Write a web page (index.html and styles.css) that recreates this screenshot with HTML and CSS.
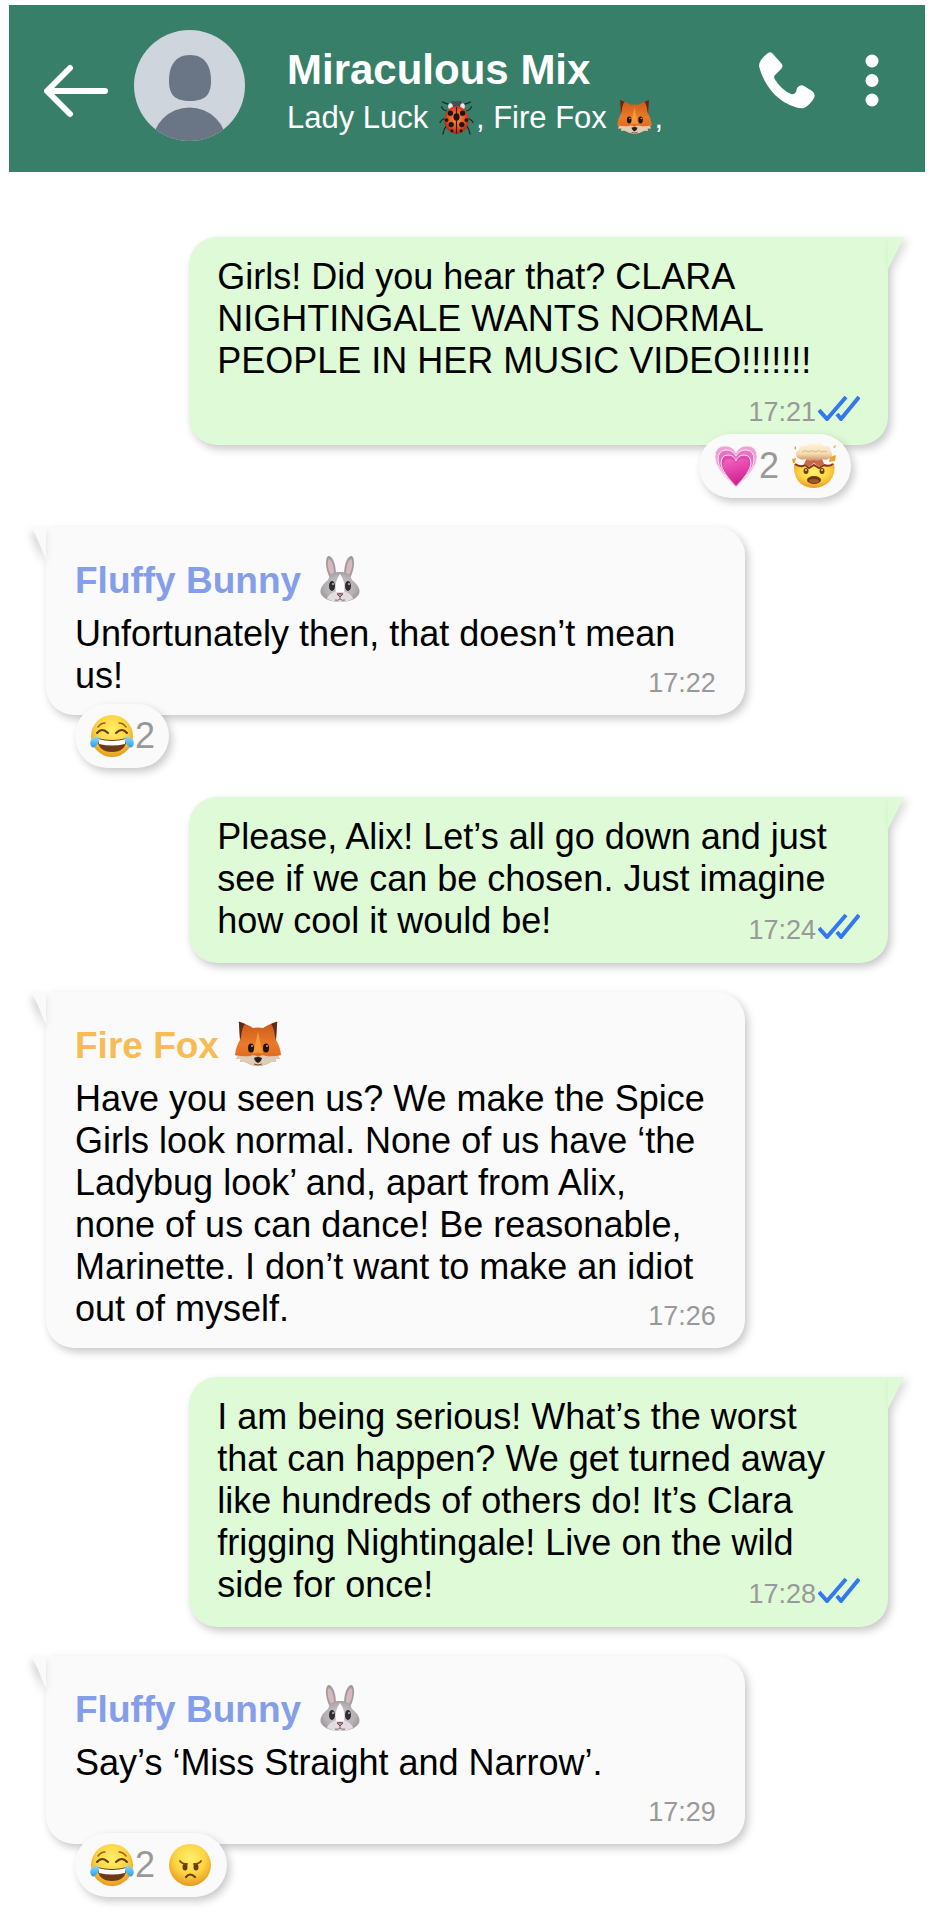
FILE: index.html
```
<!DOCTYPE html>
<html lang="en">
<head>
    <meta charset="UTF-8">
    <meta name="viewport" content="width=device-width, initial-scale=1.0">
    <title>Miraculous Mix</title>
    <link rel="stylesheet" href="styles.css">
</head>
<body>
    <!-- Emoji drawings, used further down -->
    <svg class="sprites" width="0" height="0" aria-hidden="true">
        <defs>
            <radialGradient id="face" cx="50%" cy="35%" r="65%">
                <stop offset="0" stop-color="#fff06a"/>
                <stop offset="0.55" stop-color="#fdd545"/>
                <stop offset="1" stop-color="#e79a1f"/>
            </radialGradient>
            <linearGradient id="fur" x1="0" y1="0" x2="0" y2="1">
                <stop offset="0" stop-color="#c9581c"/>
                <stop offset="0.5" stop-color="#ea7a28"/>
                <stop offset="1" stop-color="#d9601c"/>
            </linearGradient>
            <radialGradient id="shell" cx="50%" cy="45%" r="60%">
                <stop offset="0" stop-color="#ff9440"/>
                <stop offset="0.6" stop-color="#e2501f"/>
                <stop offset="1" stop-color="#9c1d10"/>
            </radialGradient>
            <radialGradient id="grey" cx="50%" cy="50%" r="60%">
                <stop offset="0" stop-color="#cfc9cc"/>
                <stop offset="0.65" stop-color="#b5afb3"/>
                <stop offset="1" stop-color="#968f95"/>
            </radialGradient>
            <linearGradient id="pink" x1="0" y1="0" x2="0.3" y2="1">
                <stop offset="0" stop-color="#f765c4"/>
                <stop offset="1" stop-color="#cf2390"/>
            </linearGradient>
            <linearGradient id="cloud" x1="0" y1="0" x2="0" y2="1">
                <stop offset="0" stop-color="#fff4d8"/>
                <stop offset="0.6" stop-color="#f4dcb2"/>
                <stop offset="1" stop-color="#d0906a"/>
            </linearGradient>
            <linearGradient id="tear" x1="0" y1="0" x2="0" y2="1">
                <stop offset="0" stop-color="#8fdcfb"/>
                <stop offset="1" stop-color="#2b9fe6"/>
            </linearGradient>
        </defs>

        <symbol id="fox" viewBox="0 0 50 50">
            <path d="M6 4Q5 2 7 3C13 5 17 7 20 9Q25 8 30 9C33 7 37 5 43 3Q45 2 44 5L43 21Q47 27 48 36L45 37L47 40L42 40L43 43L38 43Q31 47 25 47Q19 47 12 43L7 43L8 40L3 40L5 37L2 36Q3 27 7 21Z" fill="url(#fur)"/>
            <path d="M6 4Q5 2 7 3L12 5Q9 8 8 18L7 21Z" fill="#5b2c18"/>
            <path d="M44 4Q45 2 43 3L38 5Q41 8 42 18L43 21Z" fill="#5b2c18"/>
            <path d="M25 12Q22 27 20 35Q25 32 30 35Q28 27 25 12Z" fill="#f9ab3c" opacity="0.7"/>
            <path d="M2 36Q10 38 17 37Q21 35 25 38Q29 35 33 37Q40 38 48 36L45 37L47 40L42 40L43 43L38 43Q31 47 25 47Q19 47 12 43L7 43L8 40L3 40L5 37Z" fill="#dfccb6"/>
            <ellipse cx="18" cy="29" rx="3" ry="4.5" fill="#231410"/>
            <ellipse cx="33" cy="29" rx="3" ry="4.5" fill="#231410"/>
            <circle cx="19" cy="27" r="1" fill="#c8a58d"/>
            <circle cx="34" cy="27" r="1" fill="#c8a58d"/>
            <path d="M21 39Q25 37 29 39Q28 43 25 44Q22 43 21 39Z" fill="#251b18"/>
            <path d="M21 45Q25 47 29 45" fill="none" stroke="#6a4a38" stroke-width="1"/>
        </symbol>

        <symbol id="rabbit" viewBox="0 0 50 50">
            <path d="M15 24C10 15 10 4 13 2C17 1 21 9 21 21Z" fill="#a19ca1"/>
            <path d="M35 24C40 15 40 4 37 2C33 1 29 9 29 21Z" fill="#a19ca1"/>
            <path d="M16 21C12 14 12 6 14 5C17 6 19 13 19 20Z" fill="#d9b8bb"/>
            <path d="M34 21C38 14 38 6 36 5C33 6 31 13 31 20Z" fill="#d9b8bb"/>
            <path d="M25 18C32 18 35 20 37 26C42 30 46 35 44 40C41 46 32 48 25 48C18 48 9 46 6 40C4 35 8 30 13 26C15 20 18 18 25 18Z" fill="url(#grey)"/>
            <path d="M25 20Q22 28 21 37Q13 40 12 45Q18 48 25 48Q32 48 38 45Q37 40 29 37Q28 28 25 20Z" fill="#e3dbde"/>
            <path d="M25 20Q19 28 21 38H29Q31 28 25 20Z" fill="#fcfafb"/>
            <ellipse cx="17" cy="32" rx="3" ry="5" fill="#302c31"/>
            <ellipse cx="33" cy="32" rx="3" ry="5" fill="#302c31"/>
            <circle cx="18" cy="30" r="1" fill="#bdbabd"/>
            <circle cx="34" cy="30" r="1" fill="#bdbabd"/>
            <path d="M22 40Q25 39 28 40L25 43Z" fill="#d58a94" stroke="#6b4a50" stroke-width="1"/>
            <path d="M25 43V45M20 46Q23 47 25 45Q27 47 30 46" fill="none" stroke="#7c6d72" stroke-width="1"/>
        </symbol>

        <symbol id="ladybug" viewBox="0 0 50 50">
            <g fill="none" stroke="#211f22" stroke-width="1.6">
                <path d="M17 9Q12 8 6 5M33 9Q38 8 44 5M20 4L21 8M30 4L29 8M12 17Q7 16 5 11M38 17Q43 16 45 11M10 27Q5 28 3 33M40 27Q45 28 47 33M12 36Q8 41 7 48M38 36Q42 41 43 48"/>
            </g>
            <ellipse cx="25" cy="11" rx="10" ry="7" fill="#4b4d56"/>
            <ellipse cx="17" cy="11" rx="3" ry="4" fill="#e5e8ed"/>
            <ellipse cx="33" cy="11" rx="3" ry="4" fill="#e5e8ed"/>
            <ellipse cx="25" cy="29" rx="16" ry="18" fill="url(#shell)"/>
            <path d="M25 12V47" stroke="#35140f" stroke-width="1.5"/>
            <g fill="#201313">
                <ellipse cx="25" cy="25" rx="4" ry="5"/>
                <circle cx="17" cy="20" r="3.5"/>
                <circle cx="33" cy="20" r="3.5"/>
                <circle cx="12" cy="29" r="2.5"/>
                <circle cx="38" cy="29" r="2.5"/>
                <circle cx="18" cy="35" r="3.5"/>
                <circle cx="32" cy="35" r="3.5"/>
                <circle cx="19" cy="43" r="2"/>
                <circle cx="31" cy="43" r="2"/>
            </g>
        </symbol>

        <symbol id="joy" viewBox="0 0 46 46">
            <circle cx="23" cy="23" r="21" fill="url(#face)"/>
            <path d="M8 20Q13 14 19 20M27 20Q33 14 38 20" fill="none" stroke="#6b3a0d" stroke-width="2" stroke-linecap="round"/>
            <path d="M9 14Q12 10 16 10M30 10Q34 10 37 14" fill="none" stroke="#9a6015" stroke-width="1.5" stroke-linecap="round"/>
            <path d="M8 25Q23 29 38 25Q37 39 23 39Q9 39 8 25Z" fill="#6d3a17"/>
            <path d="M9 26Q23 30 37 26L36 31Q23 34 10 31Z" fill="#fff"/>
            <path d="M9 23Q11 28 7 33Q4 36 2 33Q0 29 3 26Q6 24 9 23Z" fill="url(#tear)"/>
            <path d="M37 23Q35 28 39 33Q42 36 44 33Q46 29 43 26Q40 24 37 23Z" fill="url(#tear)"/>
        </symbol>

        <symbol id="angry" viewBox="0 0 46 46">
            <circle cx="23" cy="23" r="21" fill="url(#face)"/>
            <ellipse cx="18" cy="25" rx="2.5" ry="3.5" fill="#6b3a0d"/>
            <ellipse cx="29" cy="25" rx="2.5" ry="3.5" fill="#6b3a0d"/>
            <path d="M13 19Q15 22 20 22M34 19Q32 22 27 22" fill="none" stroke="#7b460f" stroke-width="1.8" stroke-linecap="round"/>
            <path d="M19 35Q23 30 28 35" fill="none" stroke="#6b3a0d" stroke-width="2.2" stroke-linecap="round"/>
        </symbol>

        <symbol id="heart" viewBox="0 0 46 46">
            <g stroke="#fbe3f4" stroke-width="1">
                <path d="M23 44Q2 26 2 14Q2 3 12 3Q20 3 23 10Q26 3 34 3Q44 3 44 14Q44 26 23 44Z" fill="#eaa3d2"/>
                <path d="M23 44Q5 27 5 17Q5 7 13 7Q20 7 23 13Q26 7 33 7Q41 7 41 17Q41 27 23 44Z" fill="#e573bf"/>
                <path d="M23 44Q9 29 8 21Q8 12 15 12Q21 12 23 18Q25 12 31 12Q38 12 38 21Q37 29 23 44Z" fill="#dc4caa"/>
            </g>
            <path d="M23 42Q11 30 10 24Q10 16 16 16Q21 16 23 21Q25 16 30 16Q36 16 36 24Q35 30 23 42Z" fill="url(#pink)"/>
        </symbol>

        <symbol id="exploding" viewBox="0 0 46 46">
            <path d="M3 21Q9 24 14 22L18 25L23 22L28 25L33 22Q38 24 43 20Q45 30 39 38Q32 45 23 45Q13 45 7 38Q2 30 3 21Z" fill="url(#face)"/>
            <path d="M4 21Q10 25 14 22L18 25L23 22L28 25L33 22Q38 24 42 21" fill="none" stroke="#86371c" stroke-width="2"/>
            <path d="M17 13H30L33 21L28 24L23 20L18 24L13 21Z" fill="#c46a48"/>
            <path d="M6 14Q3 9 8 7Q9 2 15 3Q19 -1 24 1Q30 -1 33 3Q39 2 40 8Q43 12 39 15Q35 18 31 16Q27 19 23 17Q18 19 15 16Q9 18 6 14Z" fill="url(#cloud)"/>
            <path d="M11 9Q14 6 17 9Q21 6 24 9Q28 6 31 9Q34 7 36 9" fill="none" stroke="#ddb888" stroke-width="1"/>
            <path d="M1 16L5 15L4 20L2 20ZM39 14L45 12L44 18L38 19ZM3 5L5 3L5 7ZM42 4L45 2L44 5Z" fill="#eda52d"/>
            <ellipse cx="15" cy="28" rx="2.5" ry="3" fill="#6b4015"/>
            <ellipse cx="31" cy="28" rx="2.5" ry="3" fill="#6b4015"/>
            <circle cx="15" cy="27" r="1" fill="#e4ceab"/>
            <circle cx="31" cy="27" r="1" fill="#e4ceab"/>
            <ellipse cx="23" cy="37" rx="7" ry="4" fill="#6d3615"/>
            <ellipse cx="23" cy="38" rx="5" ry="2" fill="#9a5a2c"/>
        </symbol>

        <symbol id="ticks" viewBox="0 0 42 26">
            <path d="M1 15L9 24L28 2M19 19L23 24L41 2" fill="none" stroke="#3478f0" stroke-width="4"/>
        </symbol>
    </svg>

    <header class="header">
        <button class="icon-btn" aria-label="Back">
            <svg width="64" height="111" viewBox="0 0 64 111">
                <path d="M61 61H4M26 38L3 61L26 84" fill="none" stroke="#fff" stroke-width="6" stroke-linecap="round" stroke-linejoin="round"/>
            </svg>
        </button>
        <svg class="avatar" width="111" height="111" viewBox="0 0 111 111" role="img" aria-label="Group picture">
            <clipPath id="circle"><circle cx="55.5" cy="55.5" r="55.5"/></clipPath>
            <g clip-path="url(#circle)">
                <rect width="111" height="111" fill="#ced5dd"/>
                <path d="M56 25C71 25 77 36 77 51C77 65 71 71 56 71C41 71 35 65 35 51C35 36 41 25 56 25Z" fill="#6a7586"/>
                <circle cx="55.5" cy="115" r="37.5" fill="#6a7586"/>
            </g>
        </svg>
        <div class="title">
            <h1>Miraculous Mix</h1>
            <p>Lady Luck <svg class="emoji" role="img" aria-label="ladybug"><use href="#ladybug"/></svg>, Fire Fox <svg class="emoji" role="img" aria-label="fox"><use href="#fox"/></svg>,</p>
        </div>
        <div class="actions">
            <button class="icon-btn" aria-label="Call">
                <svg width="56" height="111" viewBox="0 0 56 111">
                    <path d="M9 23Q12 21 14 24L22 33Q25 36 22 39L17 44C14 47 15 48 17 51C21 57 27 62 32 64Q35 65 37 62L38 58Q41 54 45 56L53 61Q57 64 55 68Q51 75 45 78Q41 79 36 77C17 71 5 55 0 36Q0 33 2 30Q5 26 9 23Z" fill="#fff"/>
                </svg>
            </button>
            <button class="icon-btn" aria-label="Menu">
                <svg width="14" height="111" viewBox="0 0 14 111">
                    <g fill="#fff">
                        <circle cx="7" cy="31" r="6.5"/>
                        <circle cx="7" cy="50.5" r="6.5"/>
                        <circle cx="7" cy="70" r="6.5"/>
                    </g>
                </svg>
            </button>
        </div>
    </header>

    <main class="chat">
        <div class="message sent">
            <div class="bubble">
                <p>Girls! Did you hear that? CLARA NIGHTINGALE WANTS NORMAL PEOPLE IN HER MUSIC VIDEO!!!!!!!</p>
                <span class="time">17:21<svg class="ticks" role="img" aria-label="read"><use href="#ticks"/></svg></span>
            </div>
            <button class="reactions">
                <span><svg role="img" aria-label="heart"><use href="#heart"/></svg>2</span>
                <span><svg role="img" aria-label="exploding head"><use href="#exploding"/></svg></span>
            </button>
        </div>

        <div class="message received">
            <div class="bubble">
                <h2 class="bunny">Fluffy Bunny <svg class="emoji" role="img" aria-label="rabbit"><use href="#rabbit"/></svg></h2>
                <p>Unfortunately then, that doesn’t mean us!</p>
                <span class="time">17:22</span>
            </div>
            <button class="reactions">
                <span><svg role="img" aria-label="tears of joy"><use href="#joy"/></svg>2</span>
            </button>
        </div>

        <div class="message sent">
            <div class="bubble">
                <p>Please, Alix! Let’s all go down and just see if we can be chosen. Just imagine how cool it would be!</p>
                <span class="time">17:24<svg class="ticks" role="img" aria-label="read"><use href="#ticks"/></svg></span>
            </div>
        </div>

        <div class="message received">
            <div class="bubble">
                <h2 class="firefox">Fire Fox <svg class="emoji" role="img" aria-label="fox"><use href="#fox"/></svg></h2>
                <p>Have you seen us? We make the Spice Girls look normal. None of us have ‘the Ladybug look’ and, apart from Alix, none of us can dance! Be reasonable, Marinette. I don’t want to make an idiot out of myself.</p>
                <span class="time">17:26</span>
            </div>
        </div>

        <div class="message sent">
            <div class="bubble">
                <p>I am being serious! What’s the worst that can happen? We get turned away like hundreds of others do! It’s Clara frigging Nightingale! Live on the wild side for once!</p>
                <span class="time">17:28<svg class="ticks" role="img" aria-label="read"><use href="#ticks"/></svg></span>
            </div>
        </div>

        <div class="message received">
            <div class="bubble">
                <h2 class="bunny">Fluffy Bunny <svg class="emoji" role="img" aria-label="rabbit"><use href="#rabbit"/></svg></h2>
                <p>Say’s ‘Miss Straight and Narrow’.</p>
                <span class="time">17:29</span>
            </div>
            <button class="reactions">
                <span><svg role="img" aria-label="tears of joy"><use href="#joy"/></svg>2</span>
                <span><svg role="img" aria-label="angry"><use href="#angry"/></svg></span>
            </button>
        </div>
    </main>
</body>
</html>
```
FILE: styles.css
```
* {
    box-sizing: border-box;
}
body {
    font-family: "Liberation Sans", Arial, sans-serif;
    margin: 0;
    padding: 5px 13px 20px 9px;
    background-color: #fff;
    color: #000;
}
h1, h2, p {
    margin: 0;
}
button {
    border: none;
    padding: 0;
    font-family: inherit;
    cursor: pointer;
}
.sprites {
    position: absolute;
}

/* Header */
.header {
    display: flex;
    padding: 25px 46px 31px 35px;
    background-color: #387f6a;
    color: #fff;
}
.icon-btn {
    display: flex;
    background: none;
}
.avatar {
    flex-shrink: 0;
    margin: 0 42px 0 26px;
}
.title {
    flex: 1;
    padding-top: 16px;
}
.title h1 {
    font-size: 42px;
    line-height: 48px;
}
.title p {
    margin-top: 3px;
    font-size: 31px;
    line-height: 42px;
}
.title .emoji {
    width: 39px;
    height: 38px;
    vertical-align: -8px;
}
.actions {
    display: flex;
    gap: 50px;
}

/* Messages */
.chat {
    display: flex;
    flex-direction: column;
    gap: 29px;
    padding: 65px 37px 0;
}
.message {
    display: flex;
    flex-direction: column;
    width: 83%;
}
.sent {
    align-self: flex-end;
}
.bubble {
    display: flow-root;
    position: relative;
    border-radius: 28px;
    box-shadow: 3px 4px 8px rgba(0, 0, 0, 0.22);
    font-size: 36px;
    line-height: 42px;
}
.bubble::before {
    content: "";
    position: absolute;
    top: 0;
    border-top: 32px solid;
}
/* inline, so the time floats next to the last line when there is room */
.bubble p {
    display: inline;
}
.sent .bubble {
    padding: 19px 28px 21px;
    border-top-right-radius: 0;
    background-color: #dffad6;
}
.sent .bubble::before {
    left: 100%;
    border-top-color: #dffad6;
    border-right: 16px solid transparent;
    filter: drop-shadow(4px 3px 4px rgba(0, 0, 0, 0.15));
}
.received .bubble {
    padding: 22px 29px 18px;
    border-top-left-radius: 0;
    background-color: #fafafa;
}
.received .bubble::before {
    right: 100%;
    border-top-color: #fafafa;
    border-left: 14px solid transparent;
    filter: drop-shadow(-2px 5px 4px rgba(0, 0, 0, 0.18));
}
.bubble h2 {
    font-size: 37px;
    line-height: 64px;
}
.bubble .emoji {
    width: 50px;
    height: 50px;
    margin-left: 4px;
    vertical-align: -11px;
}
.bunny {
    color: #859eea;
}
.firefox {
    color: #f6bc56;
}
.time {
    float: right;
    margin: 9px 0 -9px;
    padding-left: 48px;
    font-size: 27px;
    color: #999;
}
.received .time {
    margin: 7px 0 -7px;
}
.ticks {
    width: 42px;
    height: 26px;
    margin-left: 2px;
}

/* Reactions hang over the bottom edge of the bubble */
.reactions {
    display: flex;
    align-items: center;
    gap: 12px;
    z-index: 1;
    height: 64px;
    margin-top: -11px;
    padding: 0 14px;
    border-radius: 32px;
    background-color: #fafafa;
    box-shadow: 3px 4px 8px rgba(0, 0, 0, 0.22);
    font-size: 36px;
    line-height: 42px;
    color: #999;
}
.reactions span {
    display: flex;
    align-items: center;
}
.reactions svg {
    width: 46px;
    height: 46px;
}
.sent .reactions {
    align-self: flex-end;
    margin-right: 37px;
}
.received .reactions {
    align-self: flex-start;
    margin-left: 29px;
}
```
